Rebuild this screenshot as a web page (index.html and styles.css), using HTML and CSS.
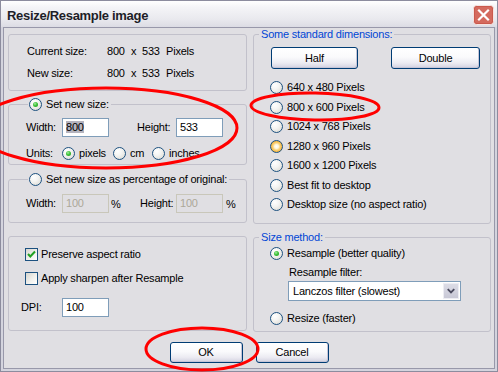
FILE: index.html
```html
<!DOCTYPE html>
<html>
<head>
<meta charset="utf-8">
<link rel="stylesheet" href="styles.css">
</head>
<body>
<div class="window">
  <div class="titlebar">
    <span class="title">Resize/Resample image</span>
    <span class="close">
      <svg width="21" height="20" viewBox="0 0 21 20">
        <rect x="0.5" y="0.5" width="20" height="19" rx="3" fill="#D46A5E" stroke="#F4E4E2"/>
        <rect x="1.5" y="1.5" width="18" height="17" rx="2" fill="none" stroke="#C0483C" stroke-opacity="0.5"/>
        <path d="M6 5.5 L15 14.5 M15 5.5 L6 14.5" stroke="#fff" stroke-width="2.2" stroke-linecap="square"/>
      </svg>
    </span>
  </div>
  <div class="client">
    <div class="columns">
      <div class="col col-left">
        <fieldset class="g g1">
          <div class="info-row"><span class="info-label">Current size:</span><span class="dims"><span>800</span><span>x</span><span>533</span><span>Pixels</span></span></div>
          <div class="info-row"><span class="info-label">New size:</span><span class="dims"><span>800</span><span>x</span><span>533</span><span>Pixels</span></span></div>
        </fieldset>
        <fieldset class="g g2">
          <legend class="rlegend"><span class="opt"><span class="rb on"></span><span class="txt">Set new size:</span></span></legend>
          <div class="size-row">
            <span class="lbl lbl-w">Width:</span>
            <span class="tb"><span class="sel">800</span></span>
            <span class="lbl lbl-h">Height:</span>
            <span class="tb">533</span>
          </div>
          <div class="units-row">
            <span class="lbl lbl-u">Units:</span>
            <span class="opt opt-px"><span class="rb on"></span><span class="txt">pixels</span></span>
            <span class="opt opt-cm"><span class="rb"></span><span class="txt">cm</span></span>
            <span class="opt"><span class="rb"></span><span class="txt">inches</span></span>
          </div>
        </fieldset>
        <fieldset class="g g3">
          <legend class="rlegend"><span class="opt"><span class="rb"></span><span class="txt">Set new size as percentage of original:</span></span></legend>
          <div class="size-row">
            <span class="lbl lbl-w">Width:</span>
            <span class="tb dis">100</span>
            <span class="pct">%</span>
            <span class="lbl lbl-h2">Height:</span>
            <span class="tb dis">100</span>
            <span class="pct2">%</span>
          </div>
        </fieldset>
        <fieldset class="g g4">
          <div class="chk-row"><span class="cb"><svg width="11" height="11" viewBox="0 0 11 11"><path d="M2 5 L4.3 7.5 L9 2.5" fill="none" stroke="#21A121" stroke-width="2"/></svg></span><span class="txt">Preserve aspect ratio</span></div>
          <div class="chk-row"><span class="cb"></span><span class="txt">Apply sharpen after Resample</span></div>
          <div class="dpi-row"><span class="lbl lbl-dpi">DPI:</span><span class="tb">100</span></div>
        </fieldset>
      </div>
      <div class="col col-right">
        <fieldset class="g g5">
          <legend class="blegend">Some standard dimensions:</legend>
          <div class="btn-row">
            <span class="btn btn-half">Half</span>
            <span class="btn btn-double">Double</span>
          </div>
          <div class="radio-list">
            <span class="opt"><span class="rb"></span><span class="txt">640 x 480 Pixels</span></span>
            <span class="opt"><span class="rb"></span><span class="txt">800 x 600 Pixels</span></span>
            <span class="opt"><span class="rb"></span><span class="txt">1024 x 768 Pixels</span></span>
            <span class="opt"><span class="rb hot"></span><span class="txt">1280 x 960 Pixels</span></span>
            <span class="opt"><span class="rb"></span><span class="txt">1600 x 1200 Pixels</span></span>
            <span class="opt"><span class="rb"></span><span class="txt">Best fit to desktop</span></span>
            <span class="opt"><span class="rb"></span><span class="txt">Desktop size (no aspect ratio)</span></span>
          </div>
        </fieldset>
        <fieldset class="g g6">
          <legend class="blegend">Size method:</legend>
          <div class="m-first"><span class="opt"><span class="rb on"></span><span class="txt">Resample (better quality)</span></span></div>
          <div class="filter-label">Resample filter:</div>
          <div class="select">
            <span class="select-text">Lanczos filter (slowest)</span>
            <span class="select-btn"><svg width="15" height="16" viewBox="0 0 15 16"><path d="M4 6 L7.5 9.5 L11 6" fill="none" stroke="#4A4A5E" stroke-width="2"/></svg></span>
          </div>
          <div class="m-last"><span class="opt"><span class="rb"></span><span class="txt">Resize (faster)</span></span></div>
        </fieldset>
      </div>
    </div>
    <div class="buttons">
      <span class="btn btn-ok">OK</span>
      <span class="btn btn-cancel">Cancel</span>
    </div>
  </div>
  <svg class="annot" width="498" height="372" viewBox="0 0 498 372">
    <ellipse cx="106" cy="128" rx="131" ry="40" fill="none" stroke="#FF0000" stroke-width="3"/>
    <ellipse cx="315" cy="106.5" rx="64" ry="13.5" fill="none" stroke="#FF0000" stroke-width="3" transform="rotate(1 315 106.5)"/>
    <ellipse cx="202" cy="349" rx="56" ry="21" fill="none" stroke="#FF0000" stroke-width="3"/>
  </svg>
</div>
</body>
</html>
```

FILE: styles.css
```css
* { box-sizing: border-box; }
html, body { margin: 0; padding: 0; }
body {
  width: 498px;
  height: 372px;
  overflow: hidden;
  background: #fff;
  font-family: "Liberation Sans", Arial, sans-serif;
  font-size: 11px;
  letter-spacing: -0.2px;
  color: #000;
}
.window {
  position: relative;
  width: 498px;
  height: 372px;
  border: 1px solid #8C8C9E;
  background: #D4D4DE;
  display: flex;
  flex-direction: column;
}
.titlebar {
  height: 26px;
  flex: none;
  display: flex;
  align-items: center;
  justify-content: space-between;
  padding: 0 3px 0 6px;
  background: linear-gradient(#FFFFFF 0%, #F4F4F7 25%, #E9E9EE 70%, #DCDCE4 100%);
}
.title {
  font-weight: bold;
  font-size: 13px;
  letter-spacing: -0.3px;
  color: #1E1E28;
  margin-top: 2px;
}
.close { display: flex; margin-top: 2px; }
.client {
  flex: 1;
  margin: 0 2px 2px 2px;
  border: 1px solid #9898AA;
  background: #E0DFE3;
  padding: 0 3px 0 4px;
  display: flex;
  flex-direction: column;
}
.columns { display: flex; gap: 6px; }
.col { display: flex; flex-direction: column; }
.col-left { width: 239px; }
.col-right { width: 238px; }

.g {
  margin: 0;
  padding: 0;
  border: 1px solid #C2C1CB;
  border-radius: 3px;
  min-width: 0;
}
legend {
  padding: 0;
  height: 13px;
  line-height: 13px;
}
.rlegend { margin-left: 19px; padding: 0 2px 0 1px; }
.blegend { margin-left: 5px; padding: 0 2px; color: #0046D5; }

.opt { display: inline-flex; align-items: center; height: 13px; line-height: 13px; white-space: nowrap; }
.opt .txt { margin-left: 4px; }
.rb {
  position: relative;
  flex: none;
  width: 13px;
  height: 13px;
  border-radius: 50%;
  border: 1px solid #1C5180;
  background: radial-gradient(circle at 35% 30%, #FFFFFF 0%, #F4F4F2 40%, #D8D6CE 100%);
}
.rb.on::after {
  content: "";
  position: absolute;
  left: 3px;
  top: 3px;
  width: 5px;
  height: 5px;
  border-radius: 50%;
  background: radial-gradient(circle at 40% 35%, #A6EBA2 0%, #3CC238 45%, #1E941E 100%);
}
.rb.hot {
  background: radial-gradient(circle, #FFFFFF 0, #FFF6DC 2px, #FBD57E 3.5px, #F4B43E 5.5px);
}

/* G1 */
.g1 { margin-top: 6px; padding: 10px 0 10px 18px; display: flex; flex-direction: column; gap: 9px; }
.info-row { display: flex; height: 13px; line-height: 13px; }
.info-label { width: 80px; }
.dims { display: flex; }
.dims span:nth-child(1) { width: 24px; }
.dims span:nth-child(2) { width: 11px; }
.dims span:nth-child(3) { width: 24px; }

/* G2 */
.g2 { margin-top: 7px; padding: 7px 0 4px 0; }
.size-row { display: flex; align-items: center; height: 19px; padding-left: 17px; }
.lbl { line-height: 13px; }
.lbl-w { width: 36px; }
.lbl-h { width: 39px; margin-left: 28px; }
.tb {
  width: 47px;
  height: 19px;
  border: 1px solid #7F9DB9;
  background: #fff;
  padding-left: 3px;
  line-height: 17px;
  flex: none;
}
.tb .sel { background: #B4B3BE; }
.tb.dis { background: #E0DFE3; border-color: #C9C7BA; color: #ACA899; }
.units-row { display: flex; align-items: center; height: 13px; margin-top: 10px; padding-left: 17px; }
.lbl-u { width: 36px; }
.opt-px { width: 51px; }
.opt-cm { width: 39px; }

/* G3 */
.g3 { margin-top: 8px; padding: 8px 0 9px 0; }
.pct { width: 31px; padding-left: 2px; }
.lbl-h2 { width: 36px; }
.pct2 { padding-left: 3px; }

/* G4 */
.g4 { margin-top: 13px; padding: 11px 0 13px 16px; display: flex; flex-direction: column; }
.chk-row { display: flex; align-items: center; height: 13px; line-height: 13px; }
.chk-row + .chk-row { margin-top: 11px; }
.chk-row .txt { margin-left: 3px; }
.cb {
  width: 13px;
  height: 13px;
  flex: none;
  border: 1px solid #1C5180;
  background: linear-gradient(135deg, #D6D5CE 0%, #F2F2EF 60%, #FFFFFF 100%);
  display: flex;
}
.dpi-row { display: flex; align-items: center; margin-top: 13px; margin-left: -4px; }
.lbl-dpi { width: 41px; }

/* G5 */
.g5 { padding: 6px 10px 12px 0; }
.btn-row { display: flex; padding-left: 17px; }
.btn {
  display: flex;
  align-items: center;
  justify-content: center;
  height: 22px;
  border: 1px solid #003C74;
  border-radius: 3px;
  background: linear-gradient(#FFFFFF 0%, #FAFAFC 45%, #ECEBF2 75%, #D2D1E0 100%);
  box-shadow: inset -1px -1px 0 #C6C5D7;
  line-height: 13px;
}
.btn-half { width: 87px; }
.btn-double { width: 89px; margin-left: 33px; }
.radio-list { display: flex; flex-direction: column; gap: 6.5px; margin-top: 12px; padding-left: 16px; }

/* G6 */
.g6 { margin-top: 7px; padding: 3px 0 6px 0; }
.m-first { display: flex; padding-left: 16px; }
.filter-label { margin-top: 6px; margin-left: 35px; height: 13px; line-height: 13px; }
.select {
  margin-top: 2px;
  margin-left: 34px;
  width: 173px;
  height: 20px;
  border: 1px solid #7F9DB9;
  background: #fff;
  display: flex;
  align-items: center;
  justify-content: space-between;
  padding: 1px;
}
.select-text { padding-left: 3px; line-height: 13px; }
.select-btn {
  width: 16px;
  height: 16px;
  background: linear-gradient(#DCDCE6, #C8C8D6);
  border: 1px solid #EDEDF3;
  display: flex;
  align-items: center;
  justify-content: center;
}
.m-last { display: flex; margin-top: 11px; padding-left: 16px; }

/* bottom buttons */
.buttons { display: flex; justify-content: center; gap: 13px; margin-top: 10px; padding-right: 1px; }
.btn-ok, .btn-cancel { width: 73px; height: 21px; }

.annot { position: absolute; left: -1px; top: -1px; pointer-events: none; }
```
